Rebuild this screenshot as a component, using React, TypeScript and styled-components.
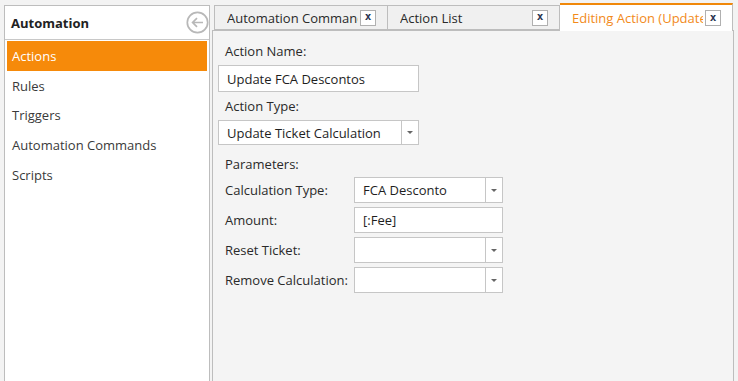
import React from "react";
import styled, { createGlobalStyle } from "styled-components";

const GlobalStyle = createGlobalStyle`
  html, body {
    margin: 0;
    padding: 0;
    background: #f3f3f3;
    font-family: "Open Sans", "Noto Sans", sans-serif;
    font-size: 13px;
    color: #2a2a2a;
    overflow: hidden;
  }
`;

const Page = styled.div`
  display: flex;
  height: 381px;
  padding: 5px 0 0 4px;
  box-sizing: border-box;
  gap: 2px;
`;

const SidePanel = styled.div`
  width: 206px;
  flex-shrink: 0;
  background: #fff;
  border: 1px solid #bdbdbd;
  border-bottom: none;
  box-sizing: border-box;
  display: flex;
  flex-direction: column;
`;

const SideHeader = styled.div`
  height: 33px;
  display: flex;
  align-items: center;
  justify-content: space-between;
  padding: 0 0 0 6px;
  border-bottom: 1px solid #c8c8c8;
  font-weight: bold;
  color: #222;
`;

const SideList = styled.div`
  display: flex;
  flex-direction: column;
  padding: 1px 2px 0 2px;
`;

const SideItem = styled.div<{ $active?: boolean }>`
  height: 29.7px;
  display: flex;
  align-items: center;
  padding-left: 5px;
  background: ${(p) => (p.$active ? "#f68a0a" : "transparent")};
  color: ${(p) => (p.$active ? "#fff" : "#3a3a3a")};
`;

const Main = styled.div`
  flex: 1;
  display: flex;
  flex-direction: column;
  min-width: 0;
`;

const TabStrip = styled.div`
  display: flex;
  align-items: flex-end;
  height: 25px;
  padding-left: 2px;
  position: relative;
  z-index: 1;
`;

const Tab = styled.div<{ $width: number; $active?: boolean }>`
  width: ${(p) => p.$width}px;
  box-sizing: border-box;
  height: ${(p) => (p.$active ? "28px" : "25px")};
  margin-bottom: ${(p) => (p.$active ? "-1px" : "0")};
  display: flex;
  align-items: center;
  gap: 2px;
  padding: 0 11px 0 12px;
  background: ${(p) => (p.$active ? "#fff" : "#f0f0f0")};
  border-right: 1px solid #bdbdbd;
  border-left: ${(p) => (p.$active ? "none" : "1px solid #bdbdbd")};
  border-bottom: ${(p) => (p.$active ? "none" : "1px solid #bdbdbd")};
  border-top: ${(p) => (p.$active ? "2px solid #f0880a" : "1px solid #bdbdbd")};
  & + & {
    border-left: none;
  }
  color: ${(p) => (p.$active ? "#f28a1a" : "#2a2a2a")};
`;

const TabLabel = styled.span`
  flex: 1;
  overflow: hidden;
  white-space: nowrap;
`;

const CloseBox = styled.span`
  width: 16px;
  height: 16px;
  box-sizing: border-box;
  border: 1px solid #b0b0b0;
  background: #fff;
  display: flex;
  align-items: center;
  justify-content: center;
  font-family: "DejaVu Sans Mono", monospace;
  font-weight: bold;
  font-size: 11px;
  color: #2b3550;
  flex-shrink: 0;
  line-height: 1;
  padding-bottom: 2px;
`;

const Content = styled.div`
  flex: 1;
  width: 522px;
  background: #f4f4f4;
  border: 1px solid #bdbdbd;
  border-bottom: none;
  box-sizing: border-box;
  padding: 10px 0 0 5px;
  display: flex;
  flex-direction: column;
`;

const Label = styled.div<{ $top?: number }>`
  padding-left: 7px;
  height: 20px;
  line-height: 20px;
  margin-top: ${(p) => p.$top ?? 0}px;
`;

const Field = styled.div<{ $width: number; $height: number; $top?: number }>`
  width: ${(p) => p.$width}px;
  height: ${(p) => p.$height}px;
  margin-top: ${(p) => p.$top ?? 0}px;
  box-sizing: border-box;
  background: #fff;
  border: 1px solid #c6c6c6;
  display: flex;
  align-items: center;
  color: #1e1e1e;
`;

const FieldText = styled.span`
  flex: 1;
  padding-left: 8px;
  white-space: nowrap;
  overflow: hidden;
`;

const DropButton = styled.span`
  width: 16px;
  align-self: stretch;
  border-left: 1px solid #c6c6c6;
  display: flex;
  align-items: center;
  justify-content: center;
`;

const Arrow = styled.span`
  width: 0;
  height: 0;
  border-left: 3px solid transparent;
  border-right: 3px solid transparent;
  border-top: 3px solid #666;
`;

const ParamGrid = styled.div`
  display: grid;
  grid-template-columns: 136px 149px;
  row-gap: 4px;
  margin-top: 3px;
  align-items: center;
`;

const ParamLabel = styled.div`
  padding-left: 7px;
`;

function BackIcon() {
  return (
    <svg width="23" height="23" viewBox="0 0 23 23" style={{ marginRight: 0 }}>
      <circle cx="11.5" cy="11.5" r="10.2" fill="none" stroke="#b8b8b8" strokeWidth="1.7" />
      <path d="M17 11.5H6.8M11 7.1L6.6 11.5l4.4 4.4" fill="none" stroke="#b8b8b8" strokeWidth="1.7" />
    </svg>
  );
}

function Combo({ width, height, text, top }: { width: number; height: number; text?: string; top?: number }) {
  return (
    <Field $width={width} $height={height} $top={top}>
      <FieldText>{text}</FieldText>
      <DropButton>
        <Arrow />
      </DropButton>
    </Field>
  );
}

export default function App() {
  const items = ["Actions", "Rules", "Triggers", "Automation Commands", "Scripts"];
  return (
    <>
      <GlobalStyle />
      <Page>
        <SidePanel>
          <SideHeader>
            Automation
            <BackIcon />
          </SideHeader>
          <SideList>
            {items.map((it, i) => (
              <SideItem key={it} $active={i === 0}>
                {it}
              </SideItem>
            ))}
          </SideList>
        </SidePanel>
        <Main>
          <TabStrip>
            <Tab $width={174}>
              <TabLabel>Automation Commands</TabLabel>
              <CloseBox>x</CloseBox>
            </Tab>
            <Tab $width={172}>
              <TabLabel>Action List</TabLabel>
              <CloseBox>x</CloseBox>
            </Tab>
            <Tab $width={173} $active>
              <TabLabel>Editing Action (Update FCA Descontos)</TabLabel>
              <CloseBox>x</CloseBox>
            </Tab>
          </TabStrip>
          <Content>
            <Label>Action Name:</Label>
            <Field $width={201} $height={27} $top={4}>
              <FieldText>Update FCA Descontos</FieldText>
            </Field>
            <Label $top={4}>Action Type:</Label>
            <Combo width={201} height={25} top={4} text="Update Ticket Calculation" />
            <Label $top={9}>Parameters:</Label>
            <ParamGrid>
              <ParamLabel>Calculation Type:</ParamLabel>
              <Combo width={149} height={26} text="FCA Desconto" />
              <ParamLabel>Amount:</ParamLabel>
              <Field $width={149} $height={26}>
                <FieldText>[:Fee]</FieldText>
              </Field>
              <ParamLabel>Reset Ticket:</ParamLabel>
              <Combo width={149} height={26} />
              <ParamLabel>Remove Calculation:</ParamLabel>
              <Combo width={149} height={26} />
            </ParamGrid>
          </Content>
        </Main>
      </Page>
    </>
  );
}
